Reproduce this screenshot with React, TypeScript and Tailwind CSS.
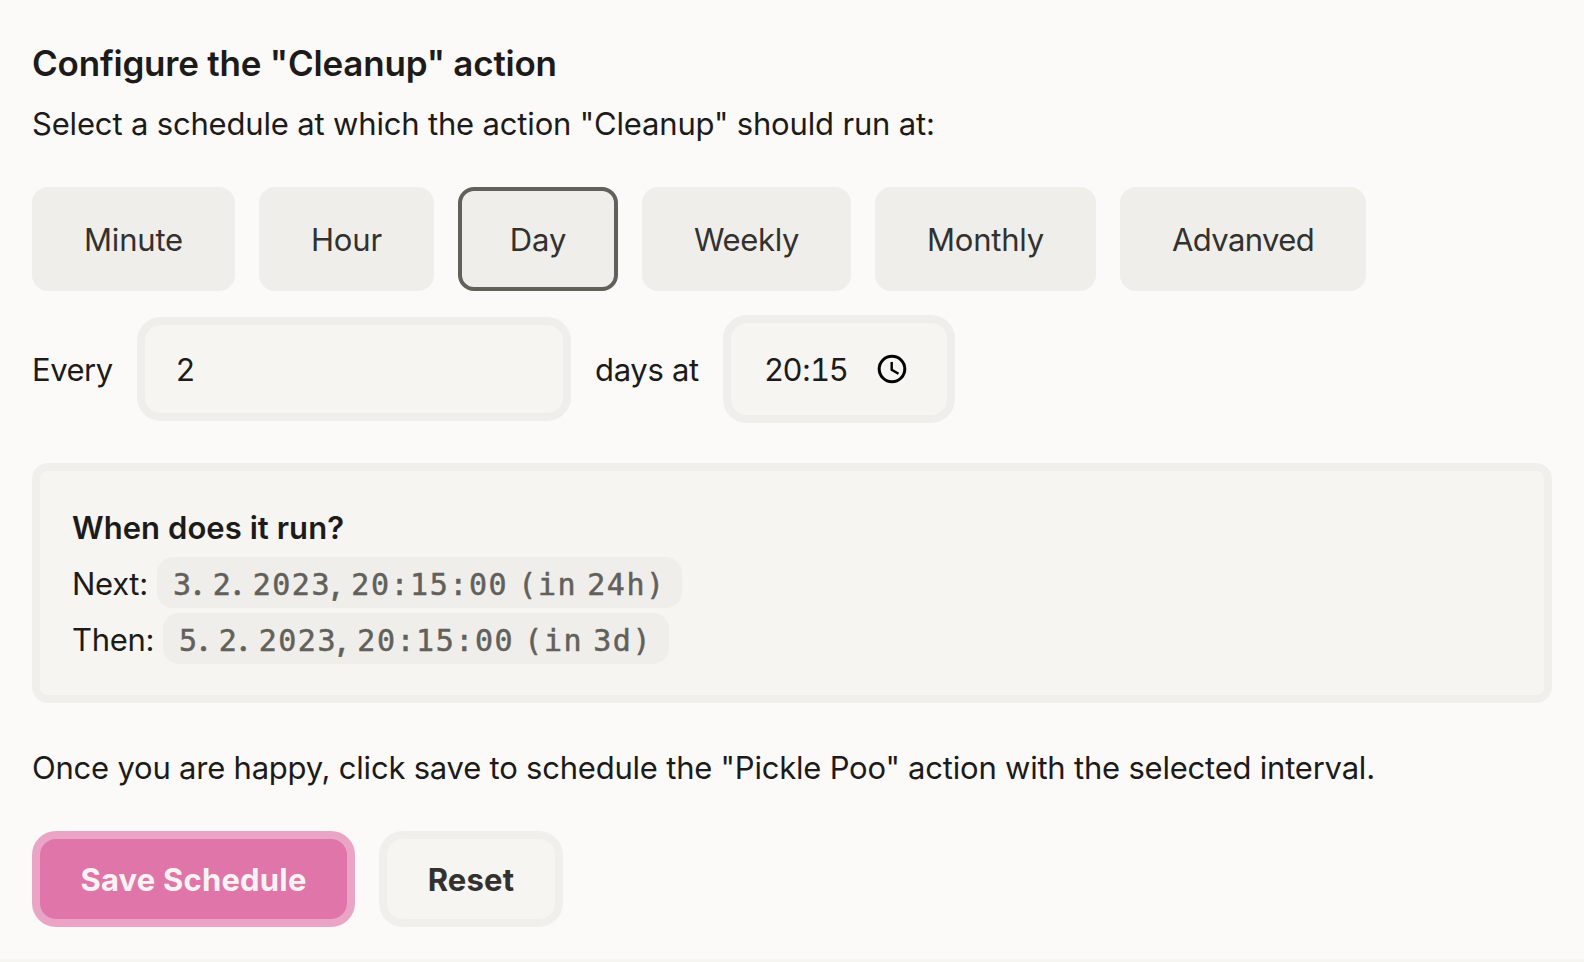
import { Fragment } from "react";

const schedules = [
  { label: "Minute", box: "w-[203px] tracking-[-0.2px]" },
  { label: "Hour", box: "w-[175px] tracking-[-0.1px]" },
  { label: "Day", box: "w-[160px] tracking-[-0.1px]" },
  { label: "Weekly", box: "w-[209px] tracking-[-0.35px]" },
  { label: "Monthly", box: "w-[221px] tracking-[-0.2px]" },
  { label: "Advanved", box: "w-[246px] tracking-[-0.6px]" },
];

function RunTime({ value, width }: { value: string; width: string }) {
  return (
    <code
      className={`mb-1 flex h-[51px] items-center rounded-2xl bg-[#efeeea] pt-[5px] pl-4 font-['DejaVu_Sans_Mono',monospace] text-[30px] tracking-[1.55px] whitespace-pre text-[#62605b] [-webkit-text-stroke:0.5px_#62605b] [word-spacing:-9.5px] ${width}`}
    >
      <span>
        {value.split(/([.,])/).map((part, i) =>
          part === "." || part === "," ? (
            <span key={i} className="font-['Inter',sans-serif] font-semibold tracking-[0.5px]">
              {part}
            </span>
          ) : (
            <Fragment key={i}>{part}</Fragment>
          ),
        )}
      </span>
    </code>
  );
}

function ClockIcon() {
  return (
    <svg className="size-[30px]" viewBox="0 0 30 30" fill="none" stroke="#000" strokeWidth="3">
      <circle cx="15" cy="15" r="12.8" />
      <path d="M14.7 8v7.8l6.8 4" strokeWidth="2.4" />
    </svg>
  );
}

export default function App() {
  return (
    <main className="flex h-[962px] w-[1584px] flex-col border-b-[3px] border-[#f7f5f2] bg-[#fbfaf8] px-8 pt-[38px] font-['Inter',sans-serif] text-[31px] leading-[56px] text-[#1c1b1a]">
      <h1 className="h-[50px] text-[35px] leading-[50px] font-semibold tracking-[-0.21px] whitespace-nowrap">
        Configure the "Cleanup" action
      </h1>
      <p className="mt-2 h-[56px] tracking-[-0.17px] whitespace-nowrap">
        Select a schedule at which the action "Cleanup" should run at:
      </p>

      <div className="mt-[35px] flex gap-6">
        {schedules.map(({ label, box }) => (
          <button
            key={label}
            className={`flex h-[104px] items-center justify-center rounded-2xl border-4 bg-[#efeeea] pt-[2px] text-[#32312f] ${box} ${
              label === "Day" ? "border-[#62605b]" : "border-[#efeeea]"
            }`}
          >
            {label}
          </button>
        ))}
      </div>

      <div className="mt-6 flex h-[108px] items-center">
        <label className="w-[105px] pt-[2px] tracking-[-0.5px]">Every</label>
        <input
          className="h-[104px] w-[434px] rounded-3xl border-8 border-[#efeeea] bg-[#f6f5f1] px-[31px] outline-none"
          defaultValue="2"
        />
        <span className="ml-6 w-[128px] pt-[2px] tracking-[-0.3px]">days at</span>
        <div className="flex h-[108px] w-[232px] items-center rounded-3xl border-8 border-[#efeeea] bg-[#f6f5f1] pl-[33px]">
          <span className="w-[113px] pt-[2px] tracking-[-1.5px] tabular-nums">
            20<span className="mx-px">:</span>15
          </span>
          <ClockIcon />
        </div>
      </div>

      <section className="mt-10 h-[240px] rounded-2xl border-8 border-[#f0efeb] bg-[#f6f5f1] px-8 pt-[29px]">
        <h2 className="font-semibold tracking-[0.06px]">When does it run?</h2>
        <div className="flex h-[56px] items-center">
          <span className="w-[85px] tracking-[-0.3px]">Next:</span>
          <RunTime value="3. 2. 2023, 20:15:00 (in 24h)" width="w-[525px]" />
        </div>
        <div className="flex h-[56px] items-center">
          <span className="w-[91px] tracking-[-0.3px]">Then:</span>
          <RunTime value="5. 2. 2023, 20:15:00 (in 3d)" width="w-[506px]" />
        </div>
      </section>

      <p className="mt-[37px] h-[56px] tracking-[-0.215px] whitespace-nowrap">
        Once you are happy, click save to schedule the "Pickle Poo" action with the selected interval.
      </p>

      <div className="mt-[35px] flex gap-6 font-bold tracking-[0.2px]">
        <button className="flex h-24 w-[323px] items-center justify-center rounded-3xl border-8 border-[#eaa4c6] bg-[#e075a9] pt-[2px] text-[#f9f3f2]">
          Save Schedule
        </button>
        <button className="flex h-24 w-[184px] items-center justify-center rounded-3xl border-8 border-[#f0efeb] bg-[#f6f5f1] pt-[2px] text-[#32312f]">
          Reset
        </button>
      </div>
    </main>
  );
}
